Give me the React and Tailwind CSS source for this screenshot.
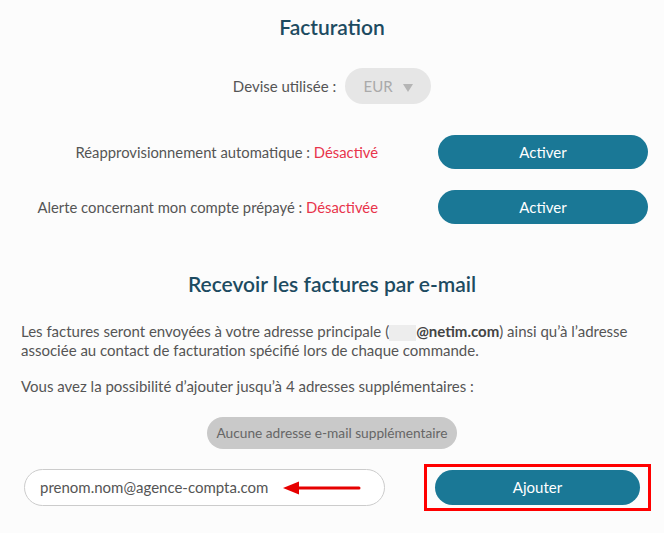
export default function App() {
  const font = { fontFamily: 'Lato, "Noto Sans", sans-serif' };
  return (
    <div className="w-[664px] h-[533px] bg-[#fcfcfc] text-[#555555] overflow-hidden" style={font}>
      <h1 className="pt-[13px] text-center text-[21px] leading-[28px] text-[#1d4b61] font-semibold">Facturation</h1>
      <div className="mt-[27px] flex items-center justify-center gap-[9px]">
        <span className="text-[15px]">Devise utilisée :</span>
        <div className="w-[86px] h-[36px] rounded-full bg-[#e6e6e6] flex items-center justify-center gap-[10px] text-[15px] text-[#aaaaaa]">
          <span>EUR</span>
          <svg width="10" height="8" viewBox="0 0 10 8" className="mt-[3px]"><path d="M0 0 H10 L5 8 Z" fill="#b5b5b5" /></svg>
        </div>
      </div>
      <div className="mt-[31px] flex items-center">
        <div className="w-[378px] text-right text-[14.8px]">
          Réapprovisionnement automatique : <span className="text-[#e8344b]">Désactivé</span>
        </div>
        <button className="ml-[60px] w-[210px] h-[34px] rounded-full bg-[#1a7896] text-white text-[15px]">Activer</button>
      </div>
      <div className="mt-[21px] flex items-center">
        <div className="w-[378px] text-right text-[14.8px]">
          Alerte concernant mon compte prépayé : <span className="text-[#e8344b]">Désactivée</span>
        </div>
        <button className="ml-[60px] w-[210px] h-[34px] rounded-full bg-[#1a7896] text-white text-[15px]">Activer</button>
      </div>
      <h2 className="mt-[46px] text-center text-[21px] leading-[28px] text-[#1d4b61] font-semibold">Recevoir les factures par e-mail</h2>
      <p className="mt-[24px] px-[21px] text-[15px] leading-[19px] whitespace-nowrap">
        Les factures seront envoyées à votre adresse principale (<span className="inline-block w-[27px] h-[16px] align-middle bg-[#ededed]"></span><b className="text-[#444]">@netim.com</b>) ainsi qu’à l’adresse
        <br />
        associée au contact de facturation spécifié lors de chaque commande.
      </p>
      <p className="mt-[17px] px-[21px] text-[15px] leading-[19px]">Vous avez la possibilité d’ajouter jusqu’à 4 adresses supplémentaires :</p>
      <div className="mt-[21px] flex justify-center">
        <div className="h-[32px] px-[10px] rounded-full bg-[#c9c9c9] text-[#666] text-[13.7px] flex items-center">Aucune adresse e-mail supplémentaire</div>
      </div>
      <div className="mt-[15px] flex items-center">
        <div className="relative ml-[24px] w-[361px] h-[37px] rounded-full border border-[#cccccc] bg-white flex items-center pl-[15px] text-[15px]">
          prenom.nom@agence-compta.com
          <svg className="absolute left-[258px] top-[10px]" width="78" height="16" viewBox="0 0 78 16">
            <path d="M14 8 H76" stroke="#e60000" strokeWidth="3" strokeLinecap="round" />
            <path d="M0 8 L16 1.5 L16 14.5 Z" fill="#e60000" />
          </svg>
        </div>
        <div className="ml-[39px] w-[227px] h-[47px] border-[3px] border-[#ff0000] flex items-center justify-center">
          <button className="w-[205px] h-[35px] rounded-full bg-[#1a7896] text-white text-[15px]">Ajouter</button>
        </div>
      </div>
    </div>
  );
}
